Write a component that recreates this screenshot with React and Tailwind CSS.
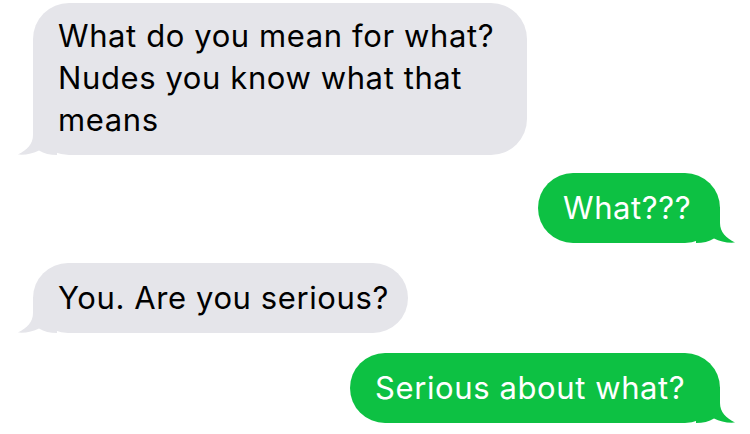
const grey = "#e5e5ea";
const green = "#0dc143";

const Tail = ({ side, color }) => (
  <svg
    width="40"
    height="36"
    viewBox="0 0 40 36"
    className={`absolute bottom-0 ${
      side === "left" ? "left-[-16px]" : "right-[-16px] -scale-x-100"
    }`}
  >
    <path
      d="M16 0 L16 16 C16 25 10 31 1 35.6 C9 36.2 16 34.5 22 31.5 C27 34.5 33 36 40 36 L40 0 Z"
      fill={color}
    />
  </svg>
);

const Bubble = ({ from, width, className = "", children }) => {
  const me = from === "me";
  return (
    <div className={`flex ${me ? "justify-end" : "justify-start"} ${className}`}>
      <div
        className={`relative rounded-[36px] px-[25px] text-[31px] leading-[42px] tracking-[0.6px] ${
          me ? "bg-[#0dc143] text-white" : "bg-[#e5e5ea] text-black"
        } ${width}`}
      >
        <Tail side={me ? "right" : "left"} color={me ? green : grey} />
        <span className="relative">{children}</span>
      </div>
    </div>
  );
};

export default function App() {
  return (
    <div
      className="w-[750px] h-[434px] overflow-hidden bg-white pt-[3px] pl-[33px] pr-[30px] flex flex-col"
      style={{ fontFamily: "Inter, 'Liberation Sans', sans-serif" }}
    >
      <Bubble from="them" width="w-[494px] pt-[12px] pb-[14px]">
        What do you mean for what? Nudes you know what that means
      </Bubble>
      <Bubble from="me" width="w-[182px] py-[14px] whitespace-nowrap" className="mt-[18px]">
        What???
      </Bubble>
      <Bubble from="them" width="w-[375px] py-[14px] whitespace-nowrap" className="mt-[20px]">
        You. Are you serious?
      </Bubble>
      <Bubble from="me" width="w-[370px] py-[14px] whitespace-nowrap" className="mt-[20px]">
        Serious about what?
      </Bubble>
    </div>
  );
}
